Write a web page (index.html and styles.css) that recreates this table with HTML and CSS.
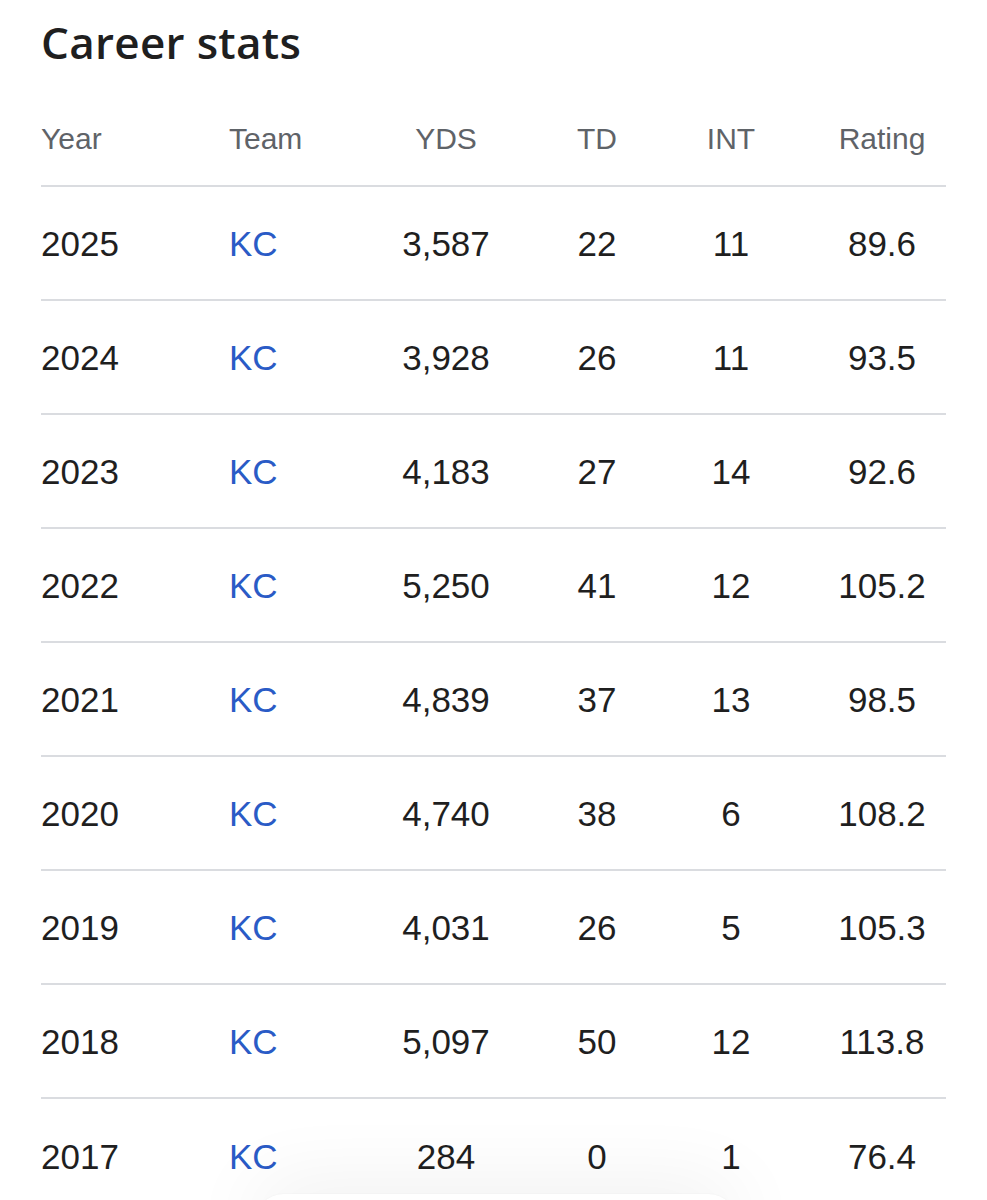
FILE: index.html
```html
<!DOCTYPE html>
<html lang="en">
<head>
<meta charset="utf-8">
<title>Career stats</title>
<link rel="stylesheet" href="styles.css">
</head>
<body>
<main class="card">
  <h1 class="title">Career stats</h1>
  <div class="stats" role="table">
    <div class="row head" role="row">
      <div class="c year">Year</div><div class="c team">Team</div><div class="c num">YDS</div><div class="c num">TD</div><div class="c num">INT</div><div class="c num rating">Rating</div>
    </div>
    <div class="row" role="row"><div class="c year">2025</div><div class="c team link">KC</div><div class="c num">3,587</div><div class="c num">22</div><div class="c num">11</div><div class="c num rating">89.6</div></div>
    <div class="row" role="row"><div class="c year">2024</div><div class="c team link">KC</div><div class="c num">3,928</div><div class="c num">26</div><div class="c num">11</div><div class="c num rating">93.5</div></div>
    <div class="row" role="row"><div class="c year">2023</div><div class="c team link">KC</div><div class="c num">4,183</div><div class="c num">27</div><div class="c num">14</div><div class="c num rating">92.6</div></div>
    <div class="row" role="row"><div class="c year">2022</div><div class="c team link">KC</div><div class="c num">5,250</div><div class="c num">41</div><div class="c num">12</div><div class="c num rating">105.2</div></div>
    <div class="row" role="row"><div class="c year">2021</div><div class="c team link">KC</div><div class="c num">4,839</div><div class="c num">37</div><div class="c num">13</div><div class="c num rating">98.5</div></div>
    <div class="row" role="row"><div class="c year">2020</div><div class="c team link">KC</div><div class="c num">4,740</div><div class="c num">38</div><div class="c num">6</div><div class="c num rating">108.2</div></div>
    <div class="row" role="row"><div class="c year">2019</div><div class="c team link">KC</div><div class="c num">4,031</div><div class="c num">26</div><div class="c num">5</div><div class="c num rating">105.3</div></div>
    <div class="row" role="row"><div class="c year">2018</div><div class="c team link">KC</div><div class="c num">5,097</div><div class="c num">50</div><div class="c num">12</div><div class="c num rating">113.8</div></div>
    <div class="row last" role="row"><div class="c year">2017</div><div class="c team link">KC</div><div class="c num">284</div><div class="c num">0</div><div class="c num">1</div><div class="c num rating">76.4</div></div>
  </div>
</main>
<div class="pill" aria-hidden="true"></div>
</body>
</html>
```
FILE: styles.css
```css
html, body {
  margin: 0;
  padding: 0;
  background: #ffffff;
}
body {
  position: relative;
  min-height: 1260px;
  font-family: "Liberation Sans", Arial, sans-serif;
  color: #1f1f1f;
}
.card {
  padding: 12px 0 0 41px;
  width: 905px;
}
.title {
  margin: 0;
  font-family: "Open Sans", "Noto Sans", sans-serif;
  font-weight: 600;
  font-size: 44px;
  line-height: 60px;
  color: #1f1f1f;
  letter-spacing: 0.3px;
}
.stats {
  margin-top: 21px;
}
.row {
  display: grid;
  grid-template-columns: 188px 141px 152px 150px 118px 156px;
  align-items: center;
  height: 114px;
  padding-top: 2px;
  box-sizing: border-box;
  border-bottom: 2px solid #dadce0;
  font-size: 35px;
}
.row.head {
  height: 94px;
  padding-top: 0;
  font-size: 30px;
  color: #5f6368;
}
.row.last {
  border-bottom: none;
}
.c {
  white-space: nowrap;
}
.num {
  text-align: center;
}
.rating {
  padding-left: 28px;
}
.link {
  color: #2a5bc6;
}
.pill {
  position: absolute;
  top: 1194px;
  left: 254px;
  width: 484px;
  height: 60px;
  border-radius: 30px;
  background: #ffffff;
  box-shadow: 0 -8px 80px rgba(0, 0, 0, 0.07), 0 0 2px rgba(0, 0, 0, 0.05);
}
```
